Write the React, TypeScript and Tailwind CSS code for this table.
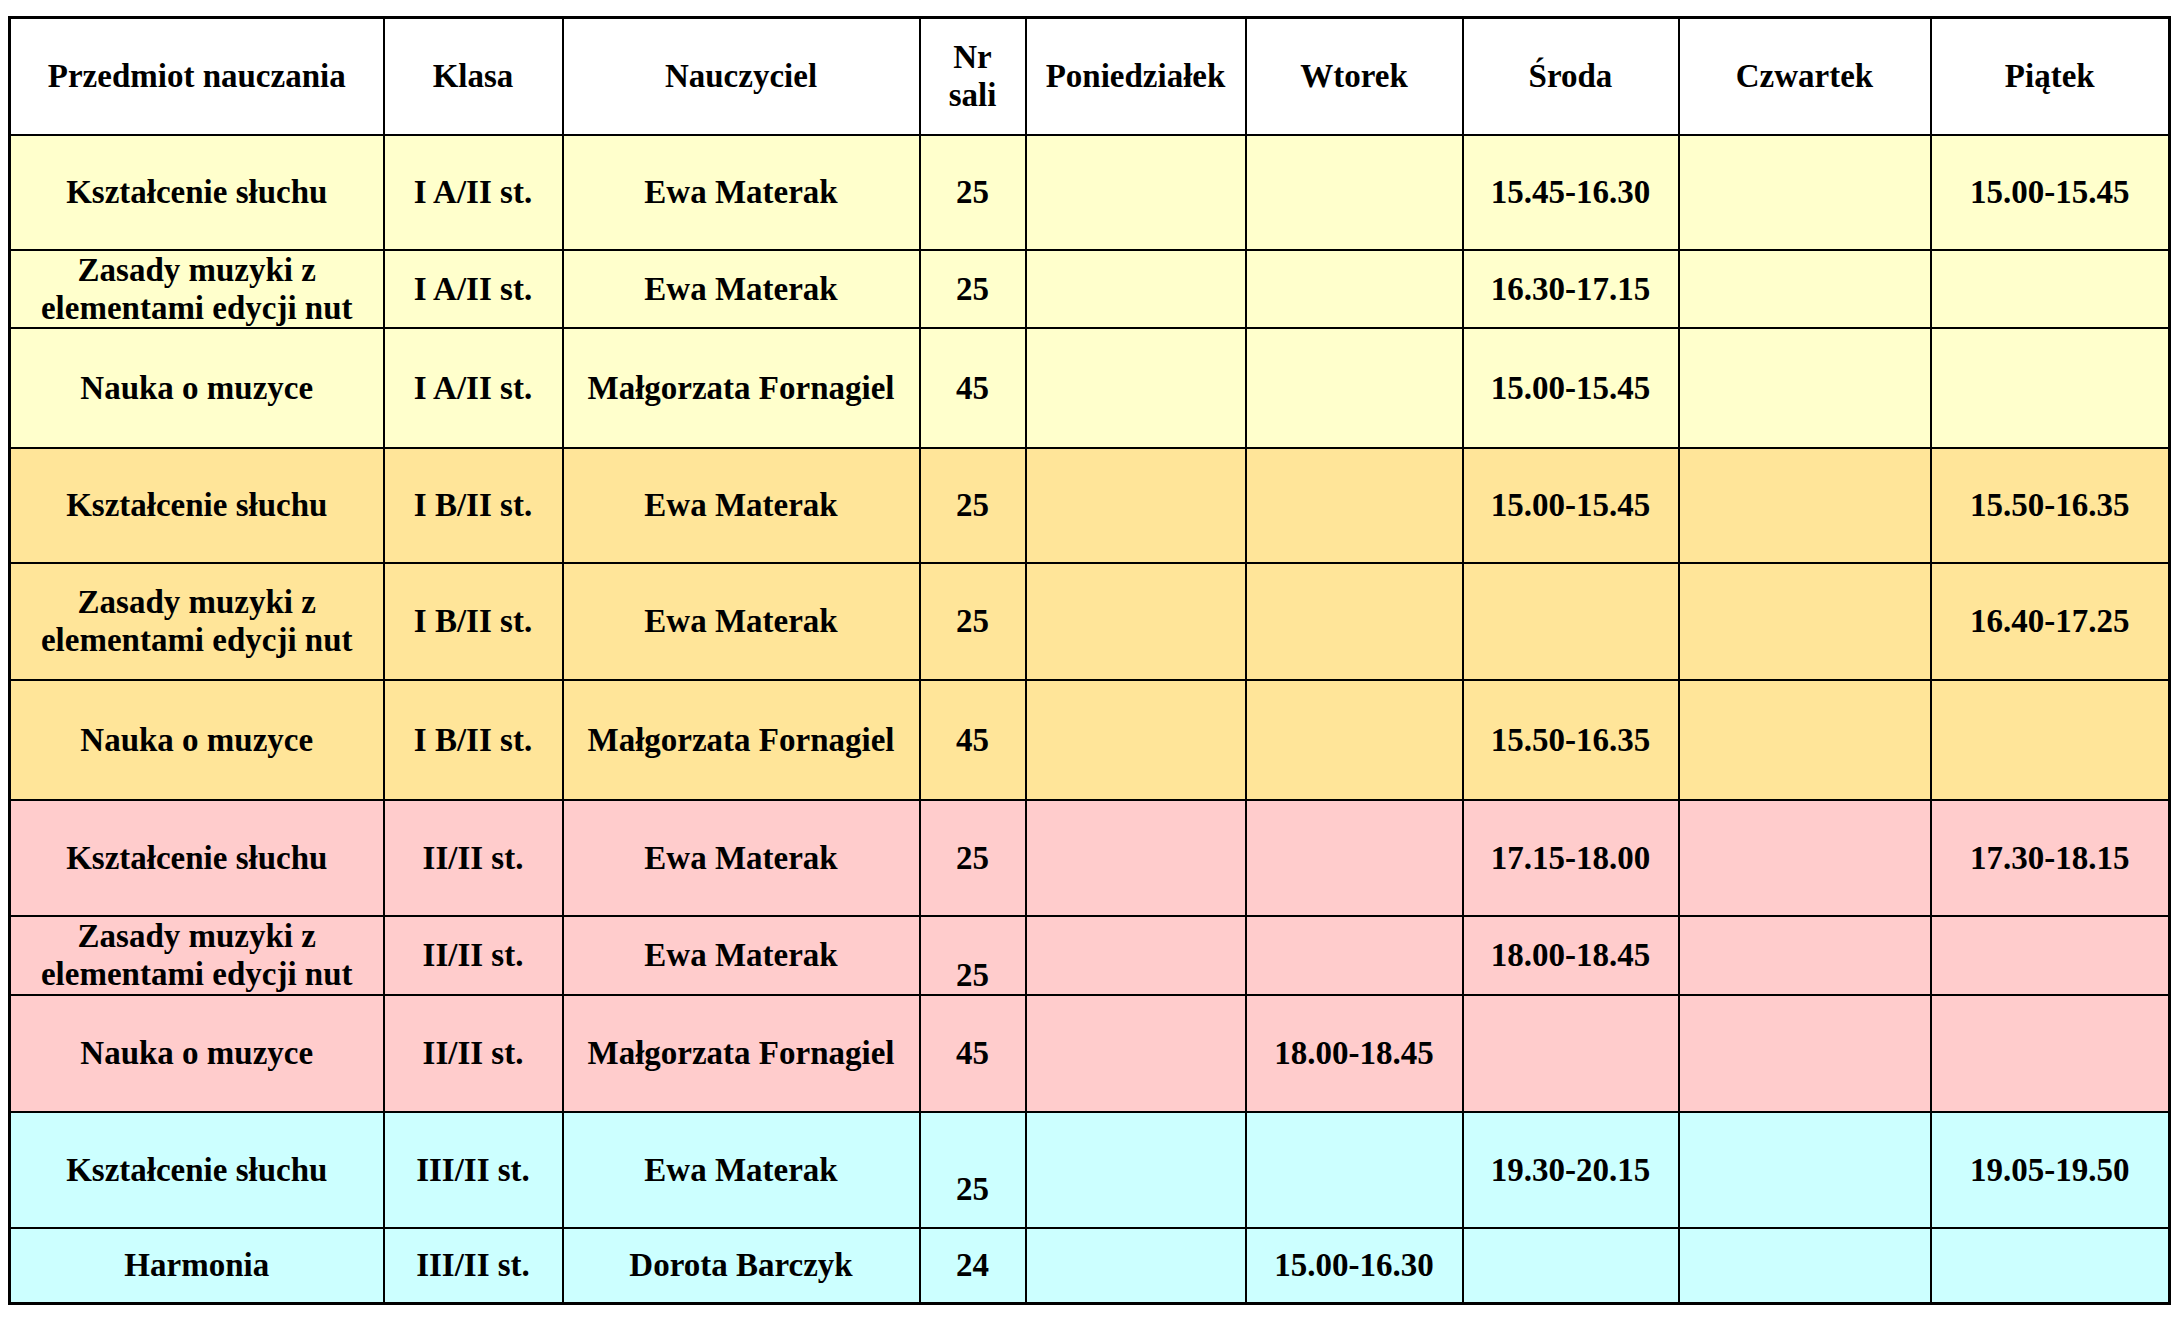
import React from "react";

type Row = {
  subject: string[];
  klasa: string;
  teacher: string;
  room: string;
  roomBottom?: string;
  days: string[];
  bg: string;
  h: string;
};

const YELLOW = "bg-[#ffffcc]";
const ORANGE = "bg-[#ffe599]";
const PINK = "bg-[#ffcccc]";
const CYAN = "bg-[#ccffff]";

const rows: Row[] = [
  { subject: ["Kształcenie słuchu"], klasa: "I A/II st.", teacher: "Ewa Materak", room: "25", days: ["", "", "15.45-16.30", "", "15.00-15.45"], bg: YELLOW, h: "h-[115px]" },
  { subject: ["Zasady muzyki z", "elementami edycji nut"], klasa: "I A/II st.", teacher: "Ewa Materak", room: "25", days: ["", "", "16.30-17.15", "", ""], bg: YELLOW, h: "h-[78px]" },
  { subject: ["Nauka o muzyce"], klasa: "I A/II st.", teacher: "Małgorzata Fornagiel", room: "45", days: ["", "", "15.00-15.45", "", ""], bg: YELLOW, h: "h-[120px]" },
  { subject: ["Kształcenie słuchu"], klasa: "I B/II st.", teacher: "Ewa Materak", room: "25", days: ["", "", "15.00-15.45", "", "15.50-16.35"], bg: ORANGE, h: "h-[115px]" },
  { subject: ["Zasady muzyki z", "elementami edycji nut"], klasa: "I B/II st.", teacher: "Ewa Materak", room: "25", days: ["", "", "", "", "16.40-17.25"], bg: ORANGE, h: "h-[117px]" },
  { subject: ["Nauka o muzyce"], klasa: "I B/II st.", teacher: "Małgorzata Fornagiel", room: "45", days: ["", "", "15.50-16.35", "", ""], bg: ORANGE, h: "h-[120px]" },
  { subject: ["Kształcenie słuchu"], klasa: "II/II st.", teacher: "Ewa Materak", room: "25", days: ["", "", "17.15-18.00", "", "17.30-18.15"], bg: PINK, h: "h-[116px]" },
  { subject: ["Zasady muzyki z", "elementami edycji nut"], klasa: "II/II st.", teacher: "Ewa Materak", room: "25", roomBottom: "align-bottom pb-0", days: ["", "", "18.00-18.45", "", ""], bg: PINK, h: "h-[79px]" },
  { subject: ["Nauka o muzyce"], klasa: "II/II st.", teacher: "Małgorzata Fornagiel", room: "45", days: ["", "18.00-18.45", "", "", ""], bg: PINK, h: "h-[117px]" },
  { subject: ["Kształcenie słuchu"], klasa: "III/II st.", teacher: "Ewa Materak", room: "25", roomBottom: "align-bottom pb-[19px]", days: ["", "", "19.30-20.15", "", "19.05-19.50"], bg: CYAN, h: "h-[116px]" },
  { subject: ["Harmonia"], klasa: "III/II st.", teacher: "Dorota Barczyk", room: "24", days: ["", "15.00-16.30", "", "", ""], bg: CYAN, h: "h-[76px]" },
];

const cell = "border-2 border-black px-1 py-0 text-center align-middle";

export default function App() {
  return (
    <main className="min-h-screen bg-white pl-[8px] pt-[16px] font-['Liberation_Serif','Times_New_Roman',serif] text-[33px] font-bold leading-[38px] text-black">
      <table className="table-fixed border-collapse border-[3px] border-black w-[2160px]">
        <colgroup>
          <col className="w-[374px]" />
          <col className="w-[179px]" />
          <col className="w-[357px]" />
          <col className="w-[106px]" />
          <col className="w-[220px]" />
          <col className="w-[217px]" />
          <col className="w-[216px]" />
          <col className="w-[252px]" />
          <col className="w-[239px]" />
        </colgroup>
        <thead>
          <tr className="h-[117px] bg-white">
            <th className={cell}>Przedmiot nauczania</th>
            <th className={cell}>Klasa</th>
            <th className={cell}>Nauczyciel</th>
            <th className={cell}>
              Nr
              <br />
              sali
            </th>
            <th className={cell}>Poniedziałek</th>
            <th className={cell}>Wtorek</th>
            <th className={cell}>Środa</th>
            <th className={cell}>Czwartek</th>
            <th className={cell}>Piątek</th>
          </tr>
        </thead>
        <tbody>
          {rows.map((r, i) => (
            <tr key={i} className={`${r.h} ${r.bg}`}>
              <td className={cell}>
                {r.subject.map((s, j) => (
                  <div key={j}>{s}</div>
                ))}
              </td>
              <td className={cell}>{r.klasa}</td>
              <td className={cell}>{r.teacher}</td>
              <td className={r.roomBottom ? `border-2 border-black px-1 text-center ${r.roomBottom}` : cell}>{r.room}</td>
              {r.days.map((d, j) => (
                <td key={j} className={cell}>
                  {d}
                </td>
              ))}
            </tr>
          ))}
        </tbody>
      </table>
    </main>
  );
}
